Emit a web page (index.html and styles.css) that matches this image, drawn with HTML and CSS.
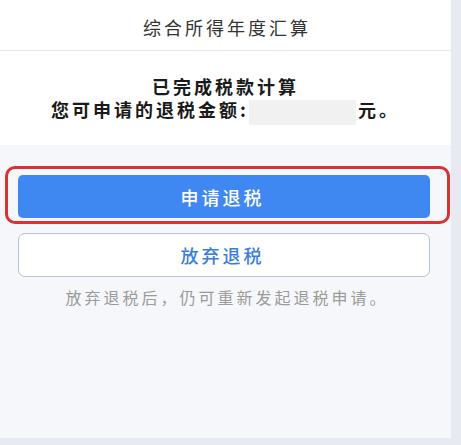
FILE: index.html
```html
<html lang="zh-CN">
<head>
  <meta charset="UTF-8">
  <meta name="viewport" content="width=device-width, initial-scale=1.0">
  <title>综合所得年度汇算</title>
  <link rel="stylesheet" href="styles.css">
</head>
<body>
  <div class="page">
    <div class="header">综合所得年度汇算</div>

    <div class="result">
      <div class="result-line">已完成税款计算</div>
      <div class="result-line">您可申请的退税金额:<span class="amount"></span>元。</div>
    </div>

    <div class="actions">
      <!-- 红框标注 -->
      <div class="highlight">
        <button class="btn btn-primary">申请退税</button>
      </div>
      <button class="btn btn-outline">放弃退税</button>
      <p class="hint">放弃退税后，仍可重新发起退税申请。</p>
    </div>
  </div>
</body>
</html>
```

FILE: styles.css
```css
body {
  margin: 0;
  padding: 0;
  background-color: #e7ebf1; /* 外圈灰蓝 */
  font-family: "Noto Sans CJK SC", "Noto Sans", sans-serif;
}

.page {
  width: 451px;
  height: 438px;
  background-color: #f5f7fa;
}

.header {
  height: 51px;
  box-sizing: border-box;
  padding-top: 4px;
  padding-left: 3px;
  display: flex;
  align-items: center;
  justify-content: center;
  background-color: #fff;
  border-bottom: 1px solid #e6e8eb;
  font-size: 18px;
  letter-spacing: 3px;
  color: #333;
}

.result {
  height: 94px;
  box-sizing: border-box;
  padding-top: 24px;
  background-color: #fff;
  text-align: center;
}

.result-line {
  line-height: 23px;
  font-size: 18px;
  font-weight: bold;
  letter-spacing: 3px;
  color: #1a1a1a;
}

.amount {
  display: inline-block;
  width: 107px;
  height: 25px;
  margin-right: 2px;
  vertical-align: middle;
  background-color: #f1f1f1; /* 金额已遮挡 */
}

.actions {
  padding-top: 21px;
}

.highlight {
  margin: 0 1px 0 5px;
  padding: 6px 17px 3px 10px;
  border: 3px solid #d93232; /* 红色标注框 */
  border-radius: 10px;
}

.btn {
  display: block;
  width: 100%;
  height: 43px;
  font-family: inherit;
  font-size: 18px;
  font-weight: 500;
  letter-spacing: 3px;
  padding-left: 3px;
  border-radius: 5px;
  cursor: pointer;
}

.btn-primary {
  background-color: #3f87f1;
  color: #fff;
  border: none;
}

.btn-outline {
  width: 412px;
  height: 44px;
  margin: 9px 0 0 18px;
  background-color: #fff;
  color: #3b7ddb;
  border: 1px solid #b3c2d9;
  border-radius: 7px;
}

.hint {
  margin: 10px 0 0;
  padding-left: 3px;
  line-height: 20px;
  text-align: center;
  font-size: 16px;
  letter-spacing: 3px;
  color: #9b9b9b;
}
```
